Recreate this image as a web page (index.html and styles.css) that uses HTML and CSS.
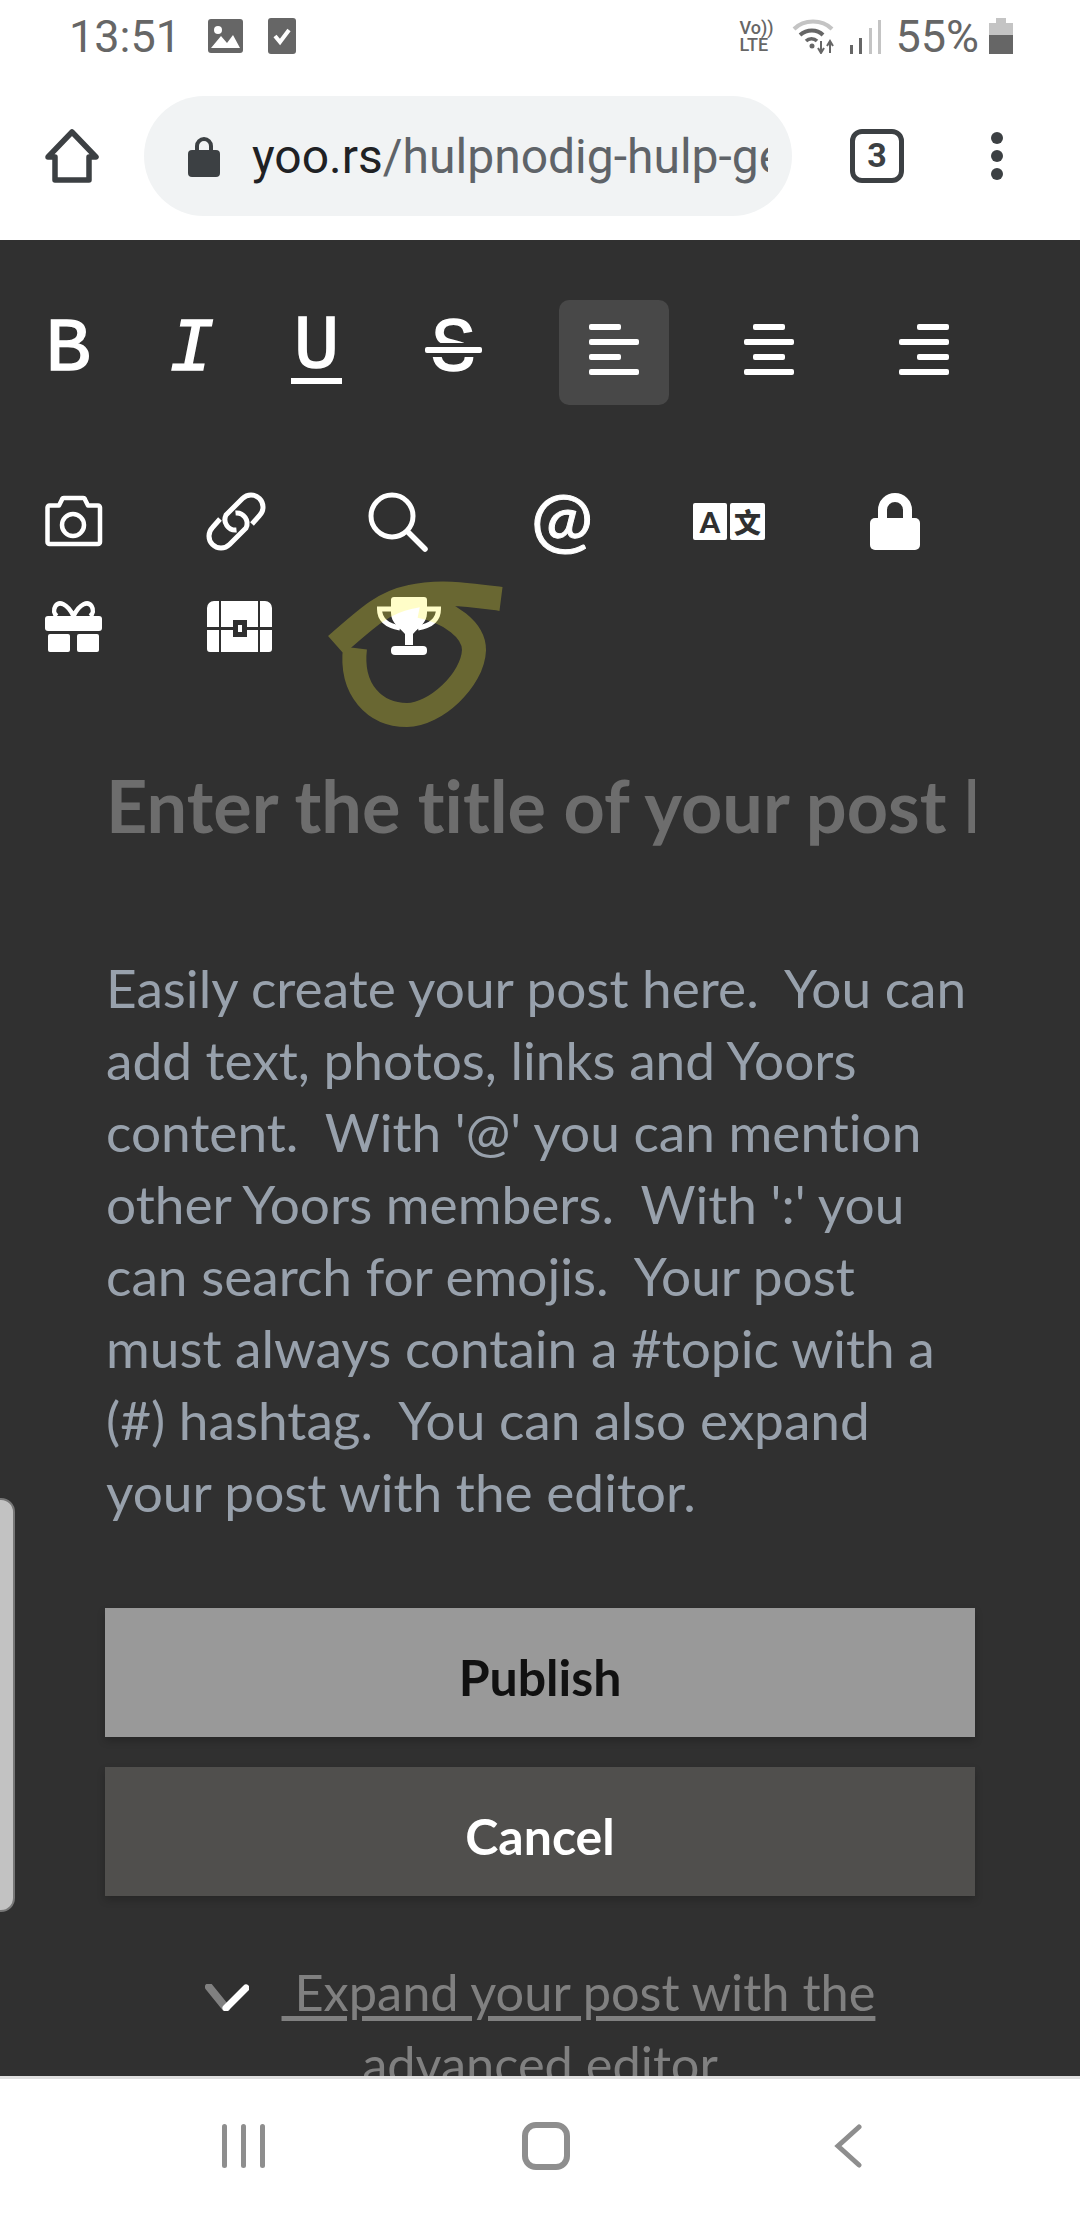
FILE: index.html
```html
<!DOCTYPE html>
<html lang="en">
<head>
    <meta charset="UTF-8">
    <meta name="viewport" content="width=device-width, initial-scale=1.0">
    <title>Yoors post</title>
    <link rel="stylesheet" href="styles.css">
</head>

<body>
    <header class="status-bar">
        <div class="status-left">
            <span class="clock">13:51</span>
            <svg class="st-image" viewBox="0 0 35 34"><rect width="35" height="34" rx="3" fill="#666"/><circle cx="10" cy="11" r="4" fill="#fff"/><path d="M3 29 13 17 19 24 25 16 32 29z" fill="#fff"/></svg>
            <svg class="st-check" viewBox="0 0 28 36"><rect width="28" height="36" rx="3" fill="#666"/><path d="M7 18 12 24 21 12" fill="none" stroke="#fff" stroke-width="4"/></svg>
        </div>
        <div class="status-right">
            <div class="volte"><span>Vo))</span><span>LTE</span></div>
            <svg class="st-wifi" viewBox="0 0 42 36">
                <path d="M2 11C12 1 30 1 40 11" fill="none" stroke="#c4c4c4" stroke-width="4"/>
                <path d="M8 17C15 11 25 11 31 17" fill="none" stroke="#666" stroke-width="4"/>
                <path d="M14 23C17 20 22 20 25 23" fill="none" stroke="#666" stroke-width="3.5"/>
                <circle cx="20" cy="28" r="2.5" fill="#666"/>
                <path d="M29 23V34M26 30l3 5 3-5M38 35V24M35 28l3-5 3 5" fill="none" stroke="#666" stroke-width="2"/>
            </svg>
            <svg class="st-signal" viewBox="0 0 32 36">
                <rect x="0" y="27" width="3" height="9" fill="#666"/>
                <rect x="9" y="20" width="3" height="16" fill="#666"/>
                <rect x="19" y="10" width="3" height="26" fill="#c4c4c4"/>
                <rect x="28" y="2" width="3" height="34" fill="#c4c4c4"/>
            </svg>
            <span class="battery-text">55%</span>
            <svg class="st-battery" viewBox="0 0 24 36"><rect x="7" width="10" height="5" fill="#c4c4c4"/><rect y="5" width="24" height="12" fill="#c4c4c4"/><rect y="17" width="24" height="19" fill="#666"/></svg>
        </div>
    </header>

    <div class="browser-bar">
        <svg class="home-icon" viewBox="0 0 54 54"><path d="M27 3 51 28H44V51H10V28H3z" fill="none" stroke="#3c4043" stroke-width="5.500" stroke-linejoin="round"/></svg>
        <div class="url-pill">
            <svg class="url-lock" viewBox="0 0 32 42"><path d="M9 18V11a7 7 0 0 1 14 0v7" fill="none" stroke="#3c4043" stroke-width="4"/><rect y="15" width="32" height="27" rx="4" fill="#3c4043"/></svg>
            <div class="url-text"><b>yoo.rs</b>/hulpnodig-hulp-ge</div>
        </div>
        <div class="tab-count">3</div>
        <div class="menu-dots"><i></i><i></i><i></i></div>
    </div>

    <main class="editor">
        <div class="side-handle"></div>

        <div class="format-row">
            <div class="marks">
                <span class="mark mark-b">B</span>
                <span class="mark mark-i">I</span>
                <span class="mark mark-u">U</span>
                <span class="mark mark-s">S</span>
            </div>
            <div class="aligns">
                <div class="align left active"><i></i><i></i><i></i><i></i></div>
                <div class="align center"><i></i><i></i><i></i><i></i></div>
                <div class="align right"><i></i><i></i><i></i><i></i></div>
            </div>
        </div>

        <div class="tool-grid">
            <svg class="tool" viewBox="0 0 72 58"><path d="M4.5 12.5H14L17 6.500a2 2 0 0 1 2-1.500H38a2 2 0 0 1 2 1.500L43 12.500H53a2 2 0 0 1 2 2V49a2 2 0 0 1-2 2H4.500a2 2 0 0 1-2-2V14.500a2 2 0 0 1 2-2z" fill="none" stroke="#fff" stroke-width="4.500" stroke-linejoin="round"/><circle cx="28" cy="32" r="11" fill="none" stroke="#fff" stroke-width="4.500"/></svg>
            <svg class="tool" viewBox="0 0 72 58"><g fill="none" stroke="#fff" stroke-width="5"><path id="chain" d="M45 31 52.500 22.500A12 12 0 0 0 35.500 5.500L19 22A10.500 10.500 0 0 0 29.500 37"/><use href="#chain" transform="rotate(180 29 28.500)"/></g></svg>
            <svg class="tool" viewBox="0 0 72 58"><circle cx="23" cy="23" r="21" fill="none" stroke="#fff" stroke-width="5"/><path d="M39 39 56 56" stroke="#fff" stroke-width="5.500" stroke-linecap="round"/></svg>
            <span class="tool-at">@</span>
            <svg class="tool" viewBox="0 0 72 58"><rect y="10" width="34" height="37" rx="2" fill="#fff"/><rect x="37" y="10" width="35" height="37" rx="2" fill="#fff"/><text x="17" y="40" class="tr-a">A</text><text x="54.500" y="40" class="tr-z">文</text></svg>
            <svg class="tool" viewBox="0 0 72 58"><path d="M27.500 27V17a12.500 12.500 0 0 1 25 0v10" fill="none" stroke="#fff" stroke-width="9"/><rect x="15" y="25" width="50" height="32" rx="5" fill="#fff"/></svg>
            <svg class="tool" viewBox="0 0 72 58"><rect y="19" width="57" height="15" rx="3" fill="#fff"/><rect x="3" y="37" width="22" height="18" rx="2" fill="#fff"/><rect x="32" y="37" width="22" height="18" rx="2" fill="#fff"/><path d="M28.500 19C22 6 14 4 10.500 9 8 13 9 17 12 19M28.500 19C35 6 43 4 46.500 9 49 13 48 17 45 19" fill="none" stroke="#fff" stroke-width="4.500"/></svg>
            <svg class="tool" viewBox="0 0 72 58"><path d="M12 4H7a7 7 0 0 0-7 7V30H12zM14 4H51V30H40V23H26V30H14zM53 4H58a7 7 0 0 1 7 7V30H53zM0 33H12V55H3a3 3 0 0 1-3-3zM14 33H26V40H40V33H51V55H14zM53 33H65V52a3 3 0 0 1-3 3H53z" fill="#fff"/><rect x="26" y="23" width="14" height="17" rx="3" fill="#303030"/><rect x="31" y="28" width="4" height="7" fill="#fff"/></svg>
            <svg class="tool" viewBox="0 0 72 58"><path d="M22 3a3 3 0 0 1 3-3H55a3 3 0 0 1 3 3V16C58 26 49 31 44 37V48H36V37C31 31 22 26 22 16z" fill="#fff"/><path d="M22 12H10.500C10.500 24 20 29 31 31M58 12H69.500C69.500 24 60 29 49 31" fill="none" stroke="#fff" stroke-width="5"/><rect x="22" y="49" width="36" height="9" rx="4" fill="#fff"/></svg>
        </div>

        <h1 class="post-title">Enter the title of your post here</h1>

        <p class="post-body">Easily create your post here.&nbsp; You can add text, photos, links and Yoors content.&nbsp; With '@' you can mention other Yoors members.&nbsp; With ':' you can search for emojis.&nbsp; Your post must always contain a #topic with a (#) hashtag.&nbsp; You can also expand your post with the editor.</p>

        <div class="btn btn-publish">Publish</div>
        <div class="btn btn-cancel">Cancel</div>

        <div class="expand">
            <svg class="expand-check" viewBox="0 0 44 27"><path d="M4 3 21 24" stroke="#808080" stroke-width="8" stroke-linecap="round"/><path d="M21 24 41 4" stroke="#fff" stroke-width="7" stroke-linecap="round"/></svg>
            <a class="expand-link">&nbsp;Expand your post with the advanced editor</a>
        </div>

        <svg class="scribble" viewBox="0 0 1080 2220"><path d="M501 599C470 595 440 590 410 597 385 602 370 615 336 645M355 648C350 690 375 715 407 715 435 715 473 680 474 650 474 630 450 612 420 606" fill="none" stroke="#fff83b" stroke-opacity=".28" stroke-width="24"/></svg>
    </main>

    <nav class="nav-bar">
        <div class="nav-recent"><i></i><i></i><i></i></div>
        <div class="nav-home"></div>
        <svg class="nav-back" viewBox="0 0 28 44"><path d="M25 3 4 22 25 41" fill="none" stroke="#8e8e8e" stroke-width="5" stroke-linecap="round"/></svg>
    </nav>
</body>

</html>
```

FILE: styles.css
```css
* {
    padding: 0;
    margin: 0;
    box-sizing: border-box;
}
html,
body {
    height: 100%;
}
body {
    width: 1080px;
    height: 2220px;
    display: flex;
    flex-direction: column;
    overflow: hidden;
    background-color: #fff;
    font-family: Lato, sans-serif;
    font-variant-ligatures: none;
}

/* status bar */
.status-bar {
    height: 72px;
    flex: none;
    display: flex;
    justify-content: space-between;
    align-items: center;
    padding: 0 67px 0 69px;
    color: #666;
    font-family: Roboto, sans-serif;
}
.status-left,
.status-right {
    display: flex;
    align-items: center;
}
.clock {
    font-size: 45px;
    margin-right: 27px;
}
.st-image {
    width: 35px;
    height: 34px;
    margin-right: 25px;
}
.st-check {
    width: 28px;
    height: 36px;
}
.volte {
    display: flex;
    flex-direction: column;
    width: 36px;
    font-size: 18px;
    font-weight: 500;
    line-height: 17px;
    margin-right: 17px;
}
.st-wifi {
    width: 42px;
    height: 36px;
    margin-right: 16px;
}
.st-signal {
    width: 32px;
    height: 36px;
    margin-right: 13px;
}
.battery-text {
    font-size: 45px;
    margin-right: 10px;
}
.st-battery {
    width: 24px;
    height: 36px;
}

/* browser bar */
.browser-bar {
    height: 168px;
    flex: none;
    display: flex;
    align-items: center;
    padding: 0 0 0 45px;
    background-color: #fff;
}
.home-icon {
    width: 54px;
    height: 54px;
    margin-right: 45px;
}
.url-pill {
    width: 648px;
    height: 120px;
    display: flex;
    align-items: center;
    padding: 0 24px 0 44px;
    border-radius: 60px;
    background-color: #f1f3f4;
}
.url-lock {
    width: 32px;
    height: 42px;
    flex: none;
    margin-right: 32px;
}
.url-text {
    flex: 1;
    overflow: hidden;
    white-space: nowrap;
    font-family: Roboto, sans-serif;
    font-size: 48px;
    color: #5f6368;
}
.url-text b {
    font-weight: 400;
    color: #202124;
}
.tab-count {
    width: 54px;
    height: 54px;
    margin-left: 58px;
    border: 5px solid #3c4043;
    border-radius: 12px;
    text-align: center;
    line-height: 42px;
    font-family: Roboto, sans-serif;
    font-size: 34px;
    font-weight: 700;
    color: #3c4043;
}
.menu-dots {
    display: flex;
    flex-direction: column;
    gap: 6px;
    margin-left: 87px;
}
.menu-dots i {
    width: 12px;
    height: 12px;
    border-radius: 50%;
    background-color: #3c4043;
}

/* editor */
.editor {
    position: relative;
    flex: 1;
    overflow: hidden;
    padding-top: 60px;
    background-color: #303030;
}
.side-handle {
    position: absolute;
    top: 1258px;
    left: -14px;
    width: 29px;
    height: 414px;
    border: 2px solid #777;
    border-radius: 14px;
    background-color: #c2c2c2;
}
.format-row {
    height: 105px;
    display: flex;
    padding-left: 48px;
}
.marks {
    display: flex;
    gap: 83px;
    height: 90px;
    padding-top: 20px;
}
.mark {
    display: block;
    height: 60px;
    line-height: 60px;
    text-align: center;
    color: #fff;
    font-family: "Liberation Mono", monospace;
    font-size: 76px;
    font-weight: 400;
    -webkit-text-stroke: 1.5px #fff;
}
.mark-b {
    width: 40px;
    text-indent: -2.5px;
}
.mark-i {
    width: 37px;
    font-style: italic;
    text-indent: -2.5px;
}
.mark-u {
    width: 51px;
    height: 67px;
    margin-top: -3px;
    border-bottom: 6px solid #fff;
}
.mark-s {
    position: relative;
    width: 57px;
}
.mark-s::after {
    content: "";
    position: absolute;
    left: 0;
    right: 0;
    top: 27px;
    height: 6px;
    border-radius: 2px;
    background-color: #fff;
    box-shadow: 0 -4px 0 #303030, 0 4px 0 #303030;
}
.aligns {
    display: flex;
    gap: 45px;
    margin-left: 77px;
}
.align {
    width: 110px;
    height: 105px;
    display: flex;
    flex-direction: column;
    gap: 9px;
    padding: 24px 30px 0;
    border-radius: 10px;
}
.align.active {
    background-color: #484848;
}
.align i {
    display: block;
    width: 50px;
    height: 6px;
    border-radius: 2px;
    background-color: #fff;
}
.align i:nth-child(odd) {
    width: 32px;
}
.align.center {
    align-items: center;
}
.align.right {
    align-items: flex-end;
}
.tool-grid {
    display: grid;
    grid-template-columns: repeat(6, 162px);
    grid-auto-rows: 104px;
    margin-top: 88px;
    padding-left: 45px;
}
.tool {
    width: 72px;
    height: 58px;
    overflow: visible;
}
.tool-at {
    height: 58px;
    line-height: 48px;
    width: 58px;
    text-align: center;
    color: #fff;
    font-size: 74px;
    font-weight: 400;
    -webkit-text-stroke: 1px #fff;
}
.tr-a {
    text-anchor: middle;
    font-family: Lato, sans-serif;
    font-size: 29px;
    font-weight: 900;
    fill: #303030;
}
.tr-z {
    text-anchor: middle;
    font-family: "Noto Sans CJK SC", sans-serif;
    font-size: 27px;
    font-weight: 900;
    fill: #303030;
}
.post-title {
    width: 869px;
    height: 90px;
    margin: 59px 0 0 106px;
    overflow: hidden;
    white-space: nowrap;
    line-height: 90px;
    font-size: 72px;
    font-weight: 700;
    color: #6d6d6d;
}
.post-body {
    width: 868px;
    margin: 101px 0 0 106px;
    font-size: 53.2px;
    line-height: 72px;
    color: #98a1ac;
}
.btn {
    width: 870px;
    height: 129px;
    margin-left: 105px;
    text-align: center;
    line-height: 138px;
    font-size: 50px;
    font-weight: 700;
    box-shadow: 0 4px 8px rgba(0, 0, 0, 0.2);
}
.btn-publish {
    margin-top: 81px;
    background-color: #999;
    color: #111;
}
.btn-cancel {
    margin-top: 30px;
    background-color: #504f4d;
    color: #fff;
}
.expand {
    width: 870px;
    margin: 60px 0 0 105px;
    text-align: center;
    line-height: 72px;
    font-size: 50.5px;
    font-weight: 400;
    color: #808080;
}
.expand-check {
    width: 44px;
    height: 27px;
    margin-right: 20px;
}
.expand-link {
    text-decoration: underline;
    text-decoration-thickness: 5px;
    text-underline-offset: 5px;
}
.scribble {
    position: absolute;
    top: -240px;
    left: 0;
    width: 1080px;
    height: 2220px;
    pointer-events: none;
}

/* android nav */
.nav-bar {
    height: 144px;
    flex: none;
    display: flex;
    align-items: flex-start;
    padding: 45px 0 0 222px;
    border-top: 3px solid #e0e0e0;
    background-color: #fff;
}
.nav-recent {
    display: flex;
    gap: 14px;
    height: 44px;
    margin-right: 257px;
}
.nav-recent i {
    width: 5px;
    border-radius: 3px;
    background-color: #8e8e8e;
}
.nav-home {
    width: 48px;
    height: 48px;
    margin-top: -2px;
    margin-right: 264px;
    border: 6px solid #8e8e8e;
    border-radius: 14px;
}
.nav-back {
    width: 28px;
    height: 44px;
}
```
